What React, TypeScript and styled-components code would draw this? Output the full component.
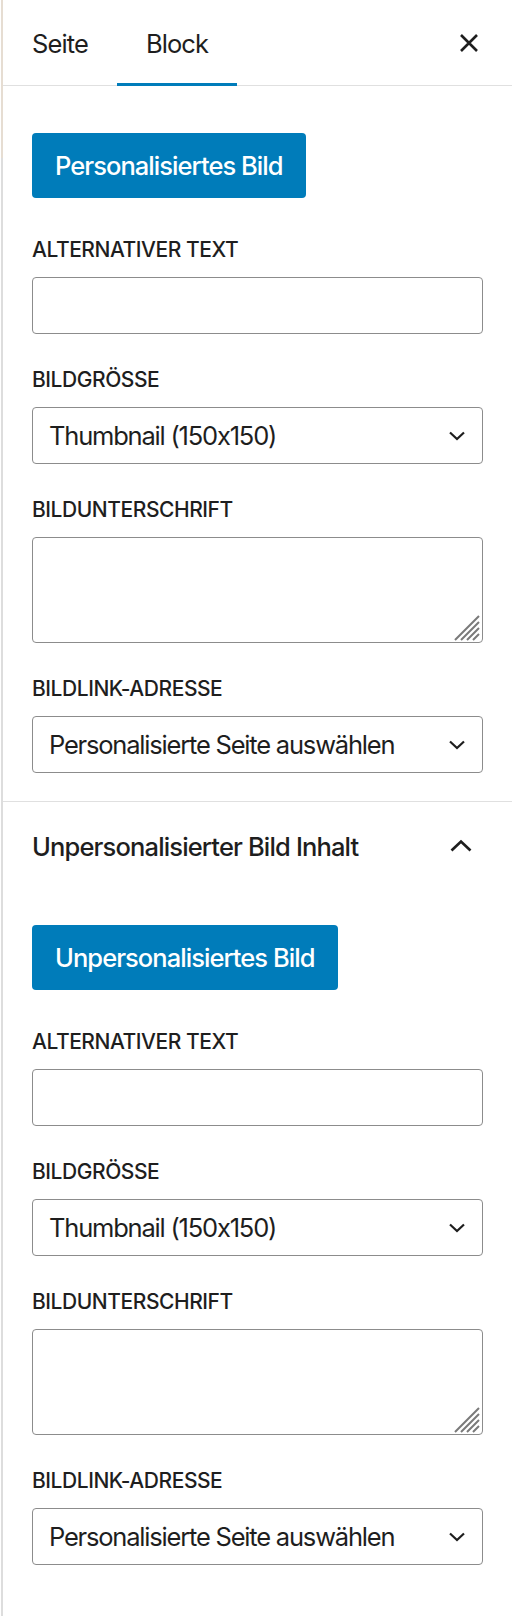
import React from 'react'
import styled, { createGlobalStyle } from 'styled-components'

const GlobalStyle = createGlobalStyle`
  html, body {
    margin: 0;
    padding: 0;
    background: #ffffff;
  }
  body {
    font-family: Inter, "Noto Sans", "Liberation Sans", sans-serif;
    font-feature-settings: "calt" 0;
    color: #1e1e1e;
  }
  * {
    box-sizing: border-box;
  }
`

const Page = styled.div`
  display: flex;
  min-height: 1616px;
  width: 512px;
`

const Gutter = styled.div`
  display: flex;
  flex-direction: column;
  width: 2px;
  margin-left: 1px;
`

const GutterSegment = styled.div<{ tone: string; length?: number }>`
  background: ${({ tone }) => tone};
  height: ${({ length }) => (length ? length + 'px' : 'auto')};
  flex: ${({ length }) => (length ? '0 0 auto' : '1')};
`

const Sidebar = styled.div`
  flex: 1;
  display: flex;
  flex-direction: column;
`

const TabBar = styled.div`
  display: flex;
  align-items: stretch;
  height: 86px;
  border-bottom: 1px solid #e0e0e0;
`

const Tab = styled.button<{ active?: boolean }>`
  display: flex;
  align-items: center;
  height: 86px;
  margin-bottom: -1px;
  padding: 0 29px;
  border: none;
  background: none;
  font-family: inherit;
  font-feature-settings: "calt" 0;
  font-size: 25.5px;
  letter-spacing: -0.9px;
  font-weight: 400;
  color: #1e1e1e;
  cursor: pointer;
  box-shadow: ${({ active }) => (active ? 'inset 0 -3px 0 #007cba' : 'none')};
`

const CloseButton = styled.button`
  display: flex;
  align-items: center;
  justify-content: center;
  width: 48px;
  height: 85px;
  margin-left: auto;
  margin-right: 19px;
  border: none;
  background: none;
  padding: 0;
  cursor: pointer;
`

const Panel = styled.div<{ last?: boolean }>`
  border-bottom: ${({ last }) => (last ? 'none' : '1px solid #e0e0e0')};
`

const PanelHeader = styled.div`
  display: flex;
  align-items: center;
  justify-content: space-between;
  height: 88px;
  padding: 0 39px 0 29px;
  font-size: 25.5px;
  letter-spacing: -0.85px;
  font-weight: 500;
`

const PanelBody = styled.div<{ top: number }>`
  display: flex;
  flex-direction: column;
  padding: ${({ top }) => top}px 29px 28px 29px;
`

const PrimaryButton = styled.button`
  align-self: flex-start;
  height: 65px;
  padding: 0 23px;
  border: none;
  border-radius: 4px;
  background: #007cba;
  color: #ffffff;
  font-family: inherit;
  font-feature-settings: "calt" 0;
  font-size: 25.5px;
  letter-spacing: -0.95px;
  font-weight: 500;
  cursor: pointer;
`

const Fields = styled.div`
  display: flex;
  flex-direction: column;
  gap: 35px;
  margin-top: 41px;
`

const Field = styled.div`
  display: flex;
  flex-direction: column;
  gap: 16px;
`

const Label = styled.label`
  display: block;
  font-size: 21px;
  line-height: 22px;
  letter-spacing: -0.45px;
  font-weight: 500;
  text-transform: uppercase;
  color: #1e1e1e;
`

const TextInput = styled.input`
  width: 100%;
  height: 57px;
  padding: 0 16px;
  border: 1px solid #8c8c8c;
  border-radius: 4px;
  font-family: inherit;
  font-size: 25.5px;
  color: #1e1e1e;
  outline: none;
`

const SelectBox = styled.div`
  display: flex;
  align-items: center;
  height: 57px;
  padding: 0 17px 0 16px;
  border: 1px solid #8c8c8c;
  border-radius: 4px;
  font-size: 25.5px;
  letter-spacing: -1.2px;
  color: #1e1e1e;
`

const SelectValue = styled.span`
  flex: 1;
`

const AreaWrap = styled.div`
  position: relative;
  height: 106px;
`

const TextArea = styled.textarea`
  display: block;
  width: 100%;
  height: 100%;
  padding: 12px 16px;
  border: 1px solid #8c8c8c;
  border-radius: 4px;
  font-family: inherit;
  font-size: 25.5px;
  resize: none;
  outline: none;
`

const Grip = styled.svg`
  position: absolute;
  right: 3px;
  bottom: 2px;
  pointer-events: none;
`

const CloseIcon = () => (
  <svg width="20" height="20" viewBox="0 0 20 20" fill="none">
    <path d="M2 2 L18 18 M18 2 L2 18" stroke="#1e1e1e" strokeWidth="2.6" />
  </svg>
)

const ChevronDown = () => (
  <svg width="16" height="10" viewBox="0 0 16 10" fill="none">
    <path d="M1 1.5 L8 8 L15 1.5" stroke="#1e1e1e" strokeWidth="2.2" />
  </svg>
)

const ChevronUp = () => (
  <svg width="24" height="14" viewBox="0 0 24 14" fill="none">
    <path d="M2.5 11.5 L12 2.5 L21.5 11.5" stroke="#1e1e1e" strokeWidth="2.7" />
  </svg>
)

const ResizeGrip = () => (
  <Grip width="26" height="26" viewBox="0 0 26 26" fill="none">
    <path
      d="M1 25 L25 1 M7 25 L25 7 M13 25 L25 13 M19 25 L25 19"
      stroke="#7a7a7a"
      strokeWidth="2"
    />
  </Grip>
)

function Select({ value }: { value: string }) {
  return (
    <SelectBox>
      <SelectValue>{value}</SelectValue>
      <ChevronDown />
    </SelectBox>
  )
}

function ImageFields() {
  return (
    <Fields>
      <Field>
        <Label>Alternativer Text</Label>
        <TextInput type="text" />
      </Field>
      <Field>
        <Label>Bildgrösse</Label>
        <Select value="Thumbnail (150x150)" />
      </Field>
      <Field>
        <Label>Bildunterschrift</Label>
        <AreaWrap>
          <TextArea />
          <ResizeGrip />
        </AreaWrap>
      </Field>
      <Field>
        <Label>Bildlink-Adresse</Label>
        <Select value="Personalisierte Seite auswählen" />
      </Field>
    </Fields>
  )
}

export default function App() {
  return (
    <>
      <GlobalStyle />
      <Page>
        <Gutter>
          <GutterSegment tone="#e6ddd2" length={158} />
          <GutterSegment tone="#dddddd" />
        </Gutter>
        <Sidebar>
          <TabBar>
            <Tab>Seite</Tab>
            <Tab active>Block</Tab>
            <CloseButton aria-label="Schließen">
              <CloseIcon />
            </CloseButton>
          </TabBar>
          <Panel>
            <PanelBody top={47}>
              <PrimaryButton>Personalisiertes Bild</PrimaryButton>
              <ImageFields />
            </PanelBody>
          </Panel>
          <Panel last>
            <PanelHeader>
              <span>Unpersonalisierter Bild Inhalt</span>
              <ChevronUp />
            </PanelHeader>
            <PanelBody top={35}>
              <PrimaryButton>Unpersonalisiertes Bild</PrimaryButton>
              <ImageFields />
            </PanelBody>
          </Panel>
        </Sidebar>
      </Page>
    </>
  )
}
